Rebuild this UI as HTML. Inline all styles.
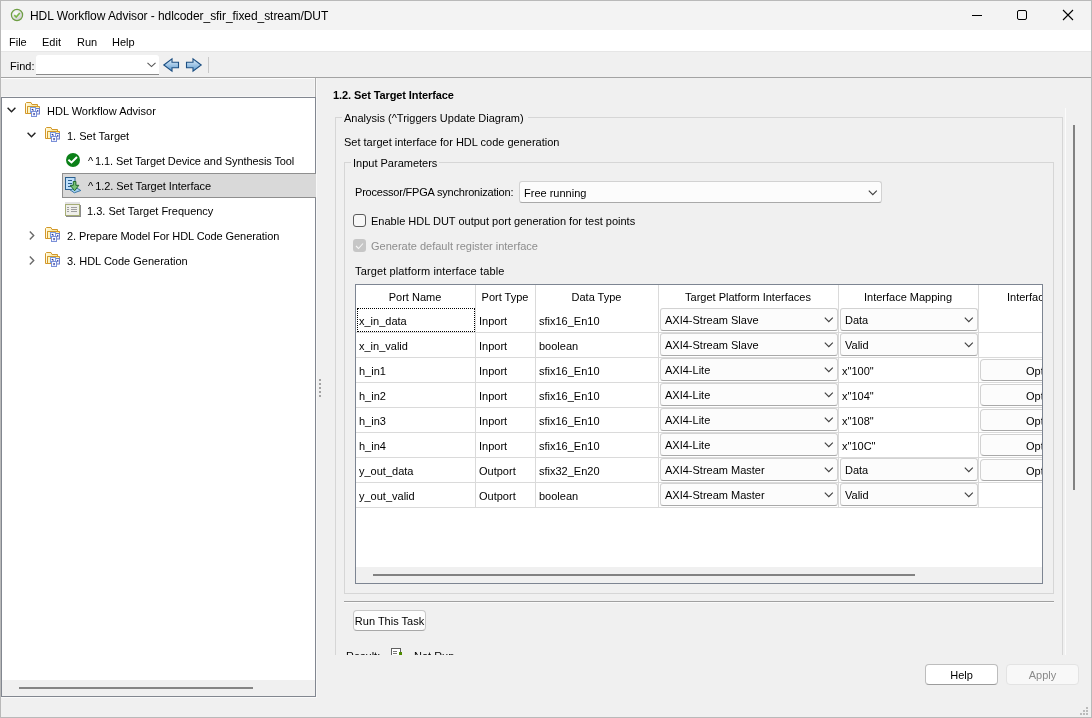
<!DOCTYPE html>
<html><head><meta charset="utf-8">
<style>
*{margin:0;padding:0;box-sizing:border-box}
html,body{width:1092px;height:718px;overflow:hidden;background:#f0f0f0;font-family:"Liberation Sans",sans-serif;color:#000}
.a{position:absolute}
.t{position:absolute;font-size:11px;line-height:13px;white-space:nowrap;color:#000}
svg{position:absolute;overflow:visible}
.hl{height:1px;background:#dadada}
.vl{width:1px;background:#dadada}
.cb{position:absolute;height:23px;background:#fcfcfc;border:1px solid #d2d2d2;border-bottom-color:#a9a9a9;border-radius:3px}
.cb span{position:absolute;left:4px;top:5px;font-size:11px;line-height:13px;white-space:nowrap}
.cb svg{position:absolute;right:3px;top:8px;width:10px;height:6px}
.ob{position:absolute;width:100px;height:22px;background:#fcfcfc;border:1px solid #d2d2d2;border-bottom-color:#a9a9a9;border-radius:4px}
.ob span{position:absolute;left:0;width:100%;text-align:center;top:5px;font-size:11px;line-height:13px}
.btn{position:absolute;background:#fdfdfd;border:1px solid #c8c8c8;border-bottom-color:#a8a8a8;border-radius:4px}
.btn span{position:absolute;left:0;width:100%;text-align:center;font-size:11px;line-height:13px}
#root{position:absolute;left:0;top:0;width:1092px;height:718px;will-change:transform;background:#f0f0f0}
</style></head><body><div id="root">
<svg width="0" height="0" style="position:absolute">
<defs>
<linearGradient id="gfold" x1="0" y1="0" x2="1" y2="1"><stop offset="0" stop-color="#fffbe0"/><stop offset="1" stop-color="#f7d868"/></linearGradient>
<linearGradient id="garr" x1="0" y1="0" x2="0" y2="1"><stop offset="0" stop-color="#e4f1fb"/><stop offset="1" stop-color="#5c9ad0"/></linearGradient>
<radialGradient id="gball" cx="0.4" cy="0.35" r="0.7"><stop offset="0" stop-color="#ffffff"/><stop offset="1" stop-color="#c9c9c9"/></radialGradient>
<symbol id="folder" viewBox="0 0 16 16">
<path d="M0.5 12.5V2.5L1.5 1.5H6L7 3.5H12.5V5.5H2.5V12.5Z" fill="url(#gfold)" stroke="#d3982b" stroke-width="1"/>
<path d="M1.5 3V12" stroke="#fff" stroke-width="0.8" opacity="0.7"/>
<path d="M2.5 12.5V5.5H14.5V8" fill="#fff3b0" stroke="#d3982b" stroke-width="1"/>
<rect x="3" y="6" width="3" height="6" fill="#fff6c0"/>
<rect x="1" y="12" width="5" height="1" fill="#d3982b"/>
<rect x="10.5" y="7.5" width="4" height="5.5" fill="#eef1fd" stroke="#6e7fca" stroke-width="1"/>
<rect x="5.5" y="6.5" width="5" height="5" fill="#f6f8ff" stroke="#7d9de0" stroke-width="1"/>
<rect x="6.5" y="10.5" width="5" height="5" fill="#f6f8ff" stroke="#7a8fd8" stroke-width="1"/>
<path d="M6.8 8.2L8.6 9.4" stroke="#0b1a8c" stroke-width="1.1"/>
<rect x="12" y="9.3" width="1.4" height="1.2" fill="#0b1a8c"/>
<rect x="8.5" y="12" width="1.1" height="2.2" fill="#0b1a8c"/>
</symbol>
</defs>
</svg>
<!-- window border -->
<div class="a" style="left:0;top:0;width:1092px;height:718px;border:1px solid #b9b9b9"></div>
<!-- title bar -->
<div class="a" style="left:1px;top:1px;width:1090px;height:29px;background:#f3f3f3"></div>
<svg style="left:10px;top:8px" width="14" height="14" viewBox="0 0 14 14">
<circle cx="7" cy="7" r="5.6" fill="url(#gball)" stroke="#6e9e43" stroke-width="1.2"/>
<path d="M4.3 7.2L6.2 9L9.8 5" fill="none" stroke="#7ab648" stroke-width="1.6"/>
</svg>
<span class="t" style="left:30px;top:9px;font-size:12px;line-height:14px;letter-spacing:-0.06px;color:#000">HDL Workflow Advisor - hdlcoder_sfir_fixed_stream/DUT</span>
<div class="a" style="left:972px;top:15px;width:10px;height:1px;background:#000"></div>
<div class="a" style="left:1017px;top:10px;width:10px;height:10px;border:1px solid #000;border-radius:2px"></div>
<svg style="left:1063px;top:10px" width="10" height="10" viewBox="0 0 10 10"><path d="M0 0L10 10M10 0L0 10" stroke="#000" stroke-width="1.1"/></svg>
<!-- menu bar -->
<div class="a" style="left:1px;top:30px;width:1090px;height:21px;background:#fff"></div>
<div class="a" style="left:1px;top:51px;width:1090px;height:1px;background:#e6e6e6"></div>
<span class="t" style="left:9px;top:36px">File</span>
<span class="t" style="left:42px;top:36px">Edit</span>
<span class="t" style="left:77px;top:36px">Run</span>
<span class="t" style="left:112px;top:36px">Help</span>
<!-- toolbar -->
<span class="t" style="left:10px;top:60px">Find:</span>
<div class="a" style="left:36px;top:55px;width:123px;height:20px;background:#fff;border-radius:3px 3px 0 0;border-bottom:1px solid #8a8a8a"></div>
<svg style="left:147px;top:62px" width="9" height="6" viewBox="0 0 9 6"><path d="M0.5 0.8L4.5 4.6L8.5 0.8" fill="none" stroke="#555" stroke-width="1.1"/></svg>
<svg style="left:163px;top:58px" width="17" height="15" viewBox="0 0 17 15">
<path d="M0.8 7L9 0.8V4.2H15.5V9.8H9V13.2Z" fill="url(#garr)" stroke="#1c4f82" stroke-width="1.1" stroke-linejoin="miter"/>
</svg>
<svg style="left:185px;top:58px" width="17" height="15" viewBox="0 0 17 15">
<path d="M16.2 7L8 0.8V4.2H1.5V9.8H8V13.2Z" fill="url(#garr)" stroke="#1c4f82" stroke-width="1.1" stroke-linejoin="miter"/>
</svg>
<div class="a" style="left:208px;top:57px;width:1px;height:16px;background:#c9c9c9"></div>
<div class="a" style="left:1px;top:77px;width:1090px;height:1px;background:#a3a3a3"></div>
<div class="a" style="left:1px;top:78px;width:314px;height:1px;background:#fdfdfd"></div>
<div class="a" style="left:315px;top:78px;width:1px;height:19px;background:#adadad"></div>
<div class="a" style="left:1px;top:96px;width:314px;height:1px;background:#f6f6f6"></div>
<div class="a" style="left:314px;top:79px;width:1px;height:17px;background:#f6f6f6"></div>
<!-- tree panel -->
<div class="a" style="left:1px;top:97px;width:315px;height:600px;border:1px solid #828790;background:#fff"></div>
<div class="a" style="left:2px;top:680px;width:313px;height:16px;background:#f0f0f0"></div>
<div class="a" style="left:19px;top:687px;width:234px;height:2px;background:#858585"></div>
<div class="a" style="left:1px;top:697px;width:315px;height:1px;background:#fafafa"></div>
<div class="a" style="left:316px;top:78px;width:1px;height:620px;background:#f8f8f8"></div>
<!-- splitter dots -->
<div class="a" style="left:319px;top:379px;width:2px;height:2px;background:#a3a3a3"></div>
<div class="a" style="left:319px;top:383px;width:2px;height:2px;background:#a3a3a3"></div>
<div class="a" style="left:319px;top:387px;width:2px;height:2px;background:#a3a3a3"></div>
<div class="a" style="left:319px;top:391px;width:2px;height:2px;background:#a3a3a3"></div>
<div class="a" style="left:319px;top:395px;width:2px;height:2px;background:#a3a3a3"></div>
<!-- selection -->
<div class="a" style="left:62px;top:173px;width:254px;height:25px;background:#d9d9d9;border:1px solid #8f8f8f;border-right:none"></div>
<!-- chevrons -->
<svg style="left:7px;top:107px" width="9" height="6" viewBox="0 0 9 6"><path d="M0.6 0.8L4.5 4.7L8.4 0.8" fill="none" stroke="#222" stroke-width="1.45"/></svg>
<svg style="left:27px;top:132px" width="9" height="6" viewBox="0 0 9 6"><path d="M0.6 0.8L4.5 4.7L8.4 0.8" fill="none" stroke="#222" stroke-width="1.45"/></svg>
<svg style="left:29px;top:231px" width="6" height="9" viewBox="0 0 6 9"><path d="M0.8 0.6L4.7 4.5L0.8 8.4" fill="none" stroke="#6a6a6a" stroke-width="1.4"/></svg>
<svg style="left:29px;top:256px" width="6" height="9" viewBox="0 0 6 9"><path d="M0.8 0.6L4.7 4.5L0.8 8.4" fill="none" stroke="#6a6a6a" stroke-width="1.4"/></svg>
<!-- folder icons -->
<svg style="left:25px;top:101px" width="16" height="16"><use href="#folder"/></svg>
<svg style="left:45px;top:126px" width="16" height="16"><use href="#folder"/></svg>
<svg style="left:45px;top:226px" width="16" height="16"><use href="#folder"/></svg>
<svg style="left:45px;top:251px" width="16" height="16"><use href="#folder"/></svg>
<!-- green check -->
<svg style="left:66px;top:153px" width="14" height="14" viewBox="0 0 14 14">
<circle cx="7" cy="7" r="7" fill="#0b8018"/>
<path d="M2.4 6.8L5.5 9.4L11 4" fill="none" stroke="#fff" stroke-width="2"/>
</svg>
<!-- set target interface icon -->
<svg style="left:65px;top:177px" width="17" height="17" viewBox="0 0 17 17">
<rect x="0.5" y="0.5" width="9.5" height="12" fill="#bddffb" stroke="#2b5f8e" stroke-width="1"/>
<path d="M3 3.5H7M3 6.5H7M3 9.5H6" stroke="#2b5f8e" stroke-width="1"/>
<path d="M5 12.8L11.8 11L15.8 13.5L9.3 15.8Z" fill="#a6d0f2" stroke="#2e6d9e" stroke-width="0.9"/>
<path d="M8.3 4.5H10.9V8.3H13.8L9.6 13.8L5.3 8.3H8.3Z" fill="#78c278" stroke="#1f6a2a" stroke-width="1"/>
</svg>
<!-- frequency icon -->
<svg style="left:65px;top:202px" width="17" height="16" viewBox="0 0 17 16">
<rect x="0" y="0" width="15" height="2" fill="#e3e3e3"/>
<rect x="1" y="3" width="15" height="12" fill="#8c8c8c"/>
<rect x="0.5" y="2.5" width="14" height="11" fill="#efefea" stroke="#a6ad76" stroke-width="1"/>
<path d="M2 5.5H4M6 5.5H12M2 7.5H4M6 7.5H12M2 9.5H4M6 9.5H12" stroke="#9e9e9e" stroke-width="1"/>
</svg>
<span class="t" style="left:47px;top:105px">HDL Workflow Advisor</span>
<span class="t" style="left:67px;top:130px">1. Set Target</span>
<span class="t" style="left:88px;top:155px;letter-spacing:-0.1px"><span style="margin-right:2px">^</span>1.1. Set Target Device and Synthesis Tool</span>
<span class="t" style="left:88px;top:180px;letter-spacing:-0.05px"><span style="margin-right:2px">^</span>1.2. Set Target Interface</span>
<span class="t" style="left:87px;top:205px">1.3. Set Target Frequency</span>
<span class="t" style="left:67px;top:230px;letter-spacing:-0.08px">2. Prepare Model For HDL Code Generation</span>
<span class="t" style="left:67px;top:255px">3. HDL Code Generation</span>
<!-- right panel -->
<span class="t" style="left:333px;top:89px;font-weight:bold;letter-spacing:-0.1px">1.2. Set Target Interface</span>
<!-- scroll viewport -->
<div class="a" style="left:317px;top:108px;width:748px;height:547px;overflow:hidden">
  <!-- analysis group box (coords relative: x-317, y-108) -->
  <div class="a" style="left:18px;top:9px;width:728px;height:700px;border:1px solid #d6d6d6"></div>
</div>
<div class="a" style="left:1065px;top:108px;width:1px;height:547px;background:#fbfbfb"></div>
<div class="a" style="left:1073px;top:125px;width:2px;height:365px;background:#828282"></div>
<div class="a" style="left:342px;top:112px;width:186px;height:12px;background:#f0f0f0"></div>
<span class="t" style="left:344px;top:112px">Analysis (^Triggers Update Diagram)</span>
<span class="t" style="left:344px;top:136px">Set target interface for HDL code generation</span>
<!-- input params box -->
<div class="a" style="left:344px;top:162px;width:710px;height:432px;border:1px solid #d6d6d6"></div>
<div class="a" style="left:351px;top:157px;width:88px;height:12px;background:#f0f0f0"></div>
<span class="t" style="left:353px;top:157px">Input Parameters</span>
<span class="t" style="left:355px;top:186px;letter-spacing:-0.2px">Processor/FPGA synchronization:</span>
<div class="cb" style="left:519px;top:181px;width:363px;height:22px;border-radius:3px"><span style="left:4px;top:5px">Free running</span><svg viewBox="0 0 10 6" style="right:3px;top:8px"><path d="M0.8 0.7L4.8 4.7L8.8 0.7" fill="none" stroke="#404040" stroke-width="1.15"/></svg></div>
<!-- checkboxes -->
<div class="a" style="left:353px;top:214px;width:13px;height:13px;border:1px solid #5a5a5a;border-radius:3px;background:#f7f7f7"></div>
<span class="t" style="left:371px;top:215px">Enable HDL DUT output port generation for test points</span>
<div class="a" style="left:353px;top:239px;width:13px;height:13px;border-radius:3px;background:#c6c6c6"></div>
<svg style="left:355px;top:242px" width="9" height="8" viewBox="0 0 9 8"><path d="M1 4L3.5 6.5L8 1.5" fill="none" stroke="#f5f5f5" stroke-width="1.1"/></svg>
<span class="t" style="left:371px;top:240px;color:#8d8d8d">Generate default register interface</span>
<span class="t" style="left:355px;top:265px;letter-spacing:0.13px">Target platform interface table</span>
<!-- table -->
<div class="a" style="left:355px;top:284px;width:688px;height:300px;border:1px solid #7d8592;background:#fff;overflow:hidden">
<div class="a" style="left:0;top:282px;width:686px;height:16px;background:#f0f0f0"></div>
<div class="a" style="left:17px;top:289px;width:542px;height:2px;background:#828282"></div>
<div class="a vl" style="left:119px;top:0;height:223px"></div>
<div class="a vl" style="left:179px;top:0;height:223px"></div>
<div class="a vl" style="left:302px;top:0;height:223px"></div>
<div class="a vl" style="left:482px;top:0;height:223px"></div>
<div class="a vl" style="left:622px;top:0;height:223px"></div>
<span class="t" style="left:-1px;width:120px;text-align:center;top:6px">Port Name</span>
<span class="t" style="left:119px;width:60px;text-align:center;top:6px">Port Type</span>
<span class="t" style="left:179px;width:123px;text-align:center;top:6px">Data Type</span>
<span class="t" style="left:302px;width:180px;text-align:center;top:6px">Target Platform Interfaces</span>
<span class="t" style="left:482px;width:140px;text-align:center;top:6px">Interface Mapping</span>
<span class="t" style="left:651px;top:6px">Interface Options</span>
<div class="a hl" style="left:0;top:47px;width:686px"></div>
<span class="t" style="left:3px;top:30px">x_in_data</span>
<span class="t" style="left:123px;top:30px">Inport</span>
<span class="t" style="left:183px;top:30px">sfix16_En10</span>
<div class="cb" style="left:304px;top:23px;width:178px"><span>AXI4-Stream Slave</span><svg viewBox="0 0 10 6"><path d="M0.8 0.7L4.8 4.7L8.8 0.7" fill="none" stroke="#404040" stroke-width="1.15"/></svg></div>
<div class="cb" style="left:484px;top:23px;width:138px"><span>Data</span><svg viewBox="0 0 10 6"><path d="M0.8 0.7L4.8 4.7L8.8 0.7" fill="none" stroke="#404040" stroke-width="1.15"/></svg></div>
<div class="a hl" style="left:0;top:72px;width:686px"></div>
<span class="t" style="left:3px;top:55px">x_in_valid</span>
<span class="t" style="left:123px;top:55px">Inport</span>
<span class="t" style="left:183px;top:55px">boolean</span>
<div class="cb" style="left:304px;top:48px;width:178px"><span>AXI4-Stream Slave</span><svg viewBox="0 0 10 6"><path d="M0.8 0.7L4.8 4.7L8.8 0.7" fill="none" stroke="#404040" stroke-width="1.15"/></svg></div>
<div class="cb" style="left:484px;top:48px;width:138px"><span>Valid</span><svg viewBox="0 0 10 6"><path d="M0.8 0.7L4.8 4.7L8.8 0.7" fill="none" stroke="#404040" stroke-width="1.15"/></svg></div>
<div class="a hl" style="left:0;top:97px;width:686px"></div>
<span class="t" style="left:3px;top:80px">h_in1</span>
<span class="t" style="left:123px;top:80px">Inport</span>
<span class="t" style="left:183px;top:80px">sfix16_En10</span>
<div class="cb" style="left:304px;top:73px;width:178px"><span>AXI4-Lite</span><svg viewBox="0 0 10 6"><path d="M0.8 0.7L4.8 4.7L8.8 0.7" fill="none" stroke="#404040" stroke-width="1.15"/></svg></div>
<span class="t" style="left:486px;top:80px">x&quot;100&quot;</span>
<div class="ob" style="left:624px;top:74px;width:130px"><span>Options</span></div>
<div class="a hl" style="left:0;top:122px;width:686px"></div>
<span class="t" style="left:3px;top:105px">h_in2</span>
<span class="t" style="left:123px;top:105px">Inport</span>
<span class="t" style="left:183px;top:105px">sfix16_En10</span>
<div class="cb" style="left:304px;top:98px;width:178px"><span>AXI4-Lite</span><svg viewBox="0 0 10 6"><path d="M0.8 0.7L4.8 4.7L8.8 0.7" fill="none" stroke="#404040" stroke-width="1.15"/></svg></div>
<span class="t" style="left:486px;top:105px">x&quot;104&quot;</span>
<div class="ob" style="left:624px;top:99px;width:130px"><span>Options</span></div>
<div class="a hl" style="left:0;top:147px;width:686px"></div>
<span class="t" style="left:3px;top:130px">h_in3</span>
<span class="t" style="left:123px;top:130px">Inport</span>
<span class="t" style="left:183px;top:130px">sfix16_En10</span>
<div class="cb" style="left:304px;top:123px;width:178px"><span>AXI4-Lite</span><svg viewBox="0 0 10 6"><path d="M0.8 0.7L4.8 4.7L8.8 0.7" fill="none" stroke="#404040" stroke-width="1.15"/></svg></div>
<span class="t" style="left:486px;top:130px">x&quot;108&quot;</span>
<div class="ob" style="left:624px;top:124px;width:130px"><span>Options</span></div>
<div class="a hl" style="left:0;top:172px;width:686px"></div>
<span class="t" style="left:3px;top:155px">h_in4</span>
<span class="t" style="left:123px;top:155px">Inport</span>
<span class="t" style="left:183px;top:155px">sfix16_En10</span>
<div class="cb" style="left:304px;top:148px;width:178px"><span>AXI4-Lite</span><svg viewBox="0 0 10 6"><path d="M0.8 0.7L4.8 4.7L8.8 0.7" fill="none" stroke="#404040" stroke-width="1.15"/></svg></div>
<span class="t" style="left:486px;top:155px">x&quot;10C&quot;</span>
<div class="ob" style="left:624px;top:149px;width:130px"><span>Options</span></div>
<div class="a hl" style="left:0;top:197px;width:686px"></div>
<span class="t" style="left:3px;top:180px">y_out_data</span>
<span class="t" style="left:123px;top:180px">Outport</span>
<span class="t" style="left:183px;top:180px">sfix32_En20</span>
<div class="cb" style="left:304px;top:173px;width:178px"><span>AXI4-Stream Master</span><svg viewBox="0 0 10 6"><path d="M0.8 0.7L4.8 4.7L8.8 0.7" fill="none" stroke="#404040" stroke-width="1.15"/></svg></div>
<div class="cb" style="left:484px;top:173px;width:138px"><span>Data</span><svg viewBox="0 0 10 6"><path d="M0.8 0.7L4.8 4.7L8.8 0.7" fill="none" stroke="#404040" stroke-width="1.15"/></svg></div>
<div class="ob" style="left:624px;top:174px;width:130px"><span>Options</span></div>
<div class="a hl" style="left:0;top:222px;width:686px"></div>
<span class="t" style="left:3px;top:205px">y_out_valid</span>
<span class="t" style="left:123px;top:205px">Outport</span>
<span class="t" style="left:183px;top:205px">boolean</span>
<div class="cb" style="left:304px;top:198px;width:178px"><span>AXI4-Stream Master</span><svg viewBox="0 0 10 6"><path d="M0.8 0.7L4.8 4.7L8.8 0.7" fill="none" stroke="#404040" stroke-width="1.15"/></svg></div>
<div class="cb" style="left:484px;top:198px;width:138px"><span>Valid</span><svg viewBox="0 0 10 6"><path d="M0.8 0.7L4.8 4.7L8.8 0.7" fill="none" stroke="#404040" stroke-width="1.15"/></svg></div>
<div class="a" style="left:1px;top:23px;width:118px;height:24px;border:1px dotted #000"></div>
</div>
<!-- separator and run button -->
<div class="a" style="left:344px;top:601px;width:710px;height:1px;background:#a0a0a0"></div>
<div class="a" style="left:344px;top:602px;width:710px;height:1px;background:#fafafa"></div>
<div class="btn" style="left:353px;top:610px;width:73px;height:21px"><span style="top:4px">Run This Task</span></div>
<!-- clipped result row -->
<div class="a" style="left:340px;top:640px;width:200px;height:15px;overflow:hidden">
  <span class="t" style="left:6px;top:10px">Result:</span>
  <div class="a" style="left:51px;top:8px;width:10px;height:12px;border:1px solid #606060;background:#fff"></div>
  <div class="a" style="left:53px;top:11px;width:4px;height:1px;background:#777"></div>
  <div class="a" style="left:53px;top:13px;width:4px;height:1px;background:#777"></div>
  <div class="a" style="left:59px;top:12px;width:3px;height:6px;background:#4f8a00"></div>
  <span class="t" style="left:74px;top:10px">Not Run</span>
</div>
<!-- help / apply -->
<div class="btn" style="left:925px;top:664px;width:73px;height:21px;background:#fff;border-color:#bdbdbd;border-bottom-color:#9c9c9c"><span style="top:4px">Help</span></div>
<div class="btn" style="left:1006px;top:664px;width:73px;height:21px;background:#f8f8f8;border-color:#e3e3e3"><span style="top:4px;color:#8a8a8a">Apply</span></div>
<!-- resize grip -->
<div class="a" style="left:1086px;top:707px;width:2px;height:2px;background:#bbb"></div>
<div class="a" style="left:1083px;top:710px;width:2px;height:2px;background:#bbb"></div>
<div class="a" style="left:1086px;top:710px;width:2px;height:2px;background:#bbb"></div>
<div class="a" style="left:1080px;top:713px;width:2px;height:2px;background:#bbb"></div>
<div class="a" style="left:1083px;top:713px;width:2px;height:2px;background:#bbb"></div>
<div class="a" style="left:1086px;top:713px;width:2px;height:2px;background:#bbb"></div>
</div></body></html>
